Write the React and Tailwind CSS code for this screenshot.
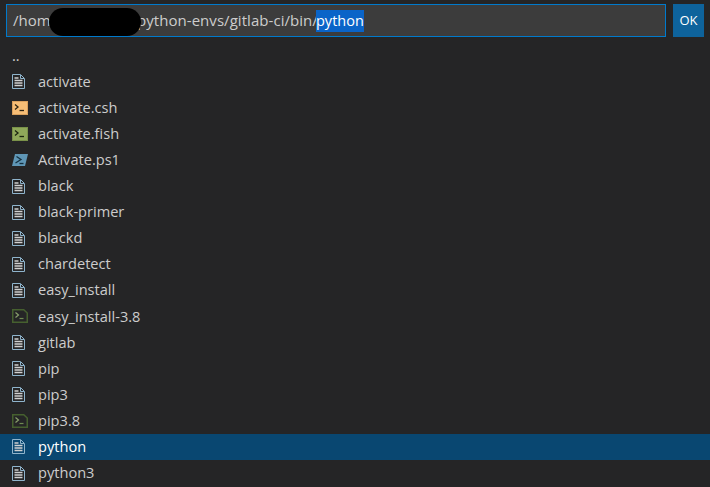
const FONT = "font-['Open_Sans','Noto_Sans',sans-serif]";

function FileIcon({ selected }) {
  return (
    <svg width="13" height="15" viewBox="0 0 13 15" className="shrink-0">
      <path d="M0.5 0.5h8L12.5 4.5V14.5H0.5z" fill={selected ? "#094771" : "#252526"} stroke="#8fb4cc" strokeWidth="1" />
      <path d="M8.5 1v3.5H12" fill="none" stroke="#8fb4cc" strokeWidth="1" />
      <path d="M2.5 4h4M2.5 6.5h8M2.5 9h8M2.5 11.5h8" stroke="#d0d0d0" strokeWidth="1.4" />
    </svg>
  );
}

function TermIcon({ bg, border, fg }) {
  return (
    <svg width="16" height="14" viewBox="0 0 16 14" className="shrink-0">
      <rect x="0.5" y="0.5" width="15" height="13" fill={bg} stroke={border} />
      <path d="M3 3.5l3 2.5L3 8.5" fill="none" stroke={fg} strokeWidth="1.3" />
      <path d="M7.5 9.5h4.5" stroke={fg} strokeWidth="1.3" />
    </svg>
  );
}

function DarkTermIcon() {
  return (
    <svg width="16" height="14" viewBox="0 0 16 14" className="shrink-0">
      <path d="M0.75 0.75h11L15.25 4v9.25H0.75z" fill="#252526" stroke="#46602f" strokeWidth="1.5" />
      <path d="M3.5 3.5l3 2.5-3 2.5" fill="none" stroke="#8aa06c" strokeWidth="1.2" />
      <path d="M7.5 9.5h4" stroke="#6f8a52" strokeWidth="1.2" />
    </svg>
  );
}

function PsIcon() {
  return (
    <svg width="16" height="14" viewBox="0 0 16 14" className="shrink-0">
      <path d="M3 1H16l-3 12H0z" fill="#5f96b5" />
      <path d="M4.5 3.5l4.5 3-5.5 3.5" fill="none" stroke="#14303f" strokeWidth="1.3" />
      <path d="M7.5 10.5h4" stroke="#14303f" strokeWidth="1.3" />
    </svg>
  );
}

const rows = [
  ["..", null],
  ["activate", "file"],
  ["activate.csh", "orange"],
  ["activate.fish", "green"],
  ["Activate.ps1", "ps"],
  ["black", "file"],
  ["black-primer", "file"],
  ["blackd", "file"],
  ["chardetect", "file"],
  ["easy_install", "file"],
  ["easy_install-3.8", "dark"],
  ["gitlab", "file"],
  ["pip", "file"],
  ["pip3", "file"],
  ["pip3.8", "dark"],
  ["python", "file"],
  ["python3", "file"],
];

function Icon({ kind, selected }) {
  if (kind === "file") return <FileIcon selected={selected} />;
  if (kind === "orange") return <TermIcon bg="#f6bd76" border="#d9a05e" fg="#2e2412" />;
  if (kind === "green") return <TermIcon bg="#8fa85a" border="#7a9149" fg="#1c2610" />;
  if (kind === "dark") return <DarkTermIcon />;
  if (kind === "ps") return <PsIcon />;
  return null;
}

export default function App() {
  return (
    <div className={`w-[710px] h-[487px] overflow-hidden bg-[#252526] text-[14.6px] text-[#cccccc] ${FONT}`}>
      <div className="flex h-[41px] items-start gap-[7px] pt-1 pl-1.5 pr-1.5">
        <div className="relative flex h-[33px] w-[660px] items-center border border-[#007acc] bg-[#3c3c3c] pl-[6px] text-[15px] whitespace-nowrap">
          <span className="w-[124px] shrink-0">/hom</span>
          <span className="w-[179px] shrink-0 tracking-[0.05px]">python-envs/gitlab-ci/bin/</span>
          <span className="bg-[#0a64c8] text-[14.5px] leading-[22px] text-white">python</span>
          <div className="absolute left-[42px] top-[3px] h-[28px] w-[92px] rounded-[14px] bg-black" />
        </div>
        <div className="flex h-[33px] w-[31px] items-center justify-center bg-[#0e639c] text-[13px] text-white">OK</div>
      </div>
      <div className="flex flex-col pt-[1.5px]">
        {rows.map(([name, kind]) => {
          const selected = name === "python";
          return (
            <div
              key={name}
              className={`flex h-[26.1px] shrink-0 items-center pl-[12px] ${selected ? "bg-[#094771] text-white" : ""}`}
            >
              <span className="flex w-[26px] items-center">
                <Icon kind={kind} selected={selected} />
              </span>
              {kind ? <span>{name}</span> : <span className="-ml-[26px]">{name}</span>}
            </div>
          );
        })}
      </div>
    </div>
  );
}
